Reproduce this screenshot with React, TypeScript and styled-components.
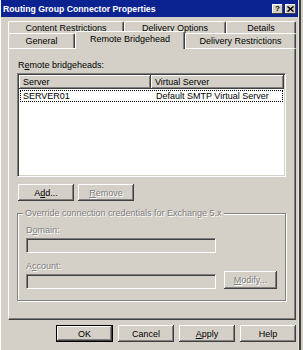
import styled, { createGlobalStyle } from "styled-components";

const GlobalStyle = createGlobalStyle`
  html, body {
    margin: 0;
    padding: 0;
    background: #d4d0c8;
  }
  body {
    font-family: "Liberation Sans", Arial, sans-serif;
    font-size: 9px;
    color: #000;
  }
  * {
    box-sizing: border-box;
  }
`;

const Window = styled.div`
  width: 301px;
  height: 350px;
  background: #d4d0c8;
  border-left: 1px solid #fff;
  border-right: 2px solid #404040;
  box-shadow: inset -1px 0 #e8e6e0;
  display: flex;
  flex-direction: column;
`;

const TitleBar = styled.div`
  height: 17px;
  margin-right: 1px;
  background: #0b2390;
  padding: 0 2px 0 2px;
  display: flex;
  align-items: center;
  justify-content: space-between;
`;

const Title = styled.span`
  color: #fff;
  font-weight: bold;
  font-size: 8.7px;
`;

const CaptionButtons = styled.div`
  display: flex;
  gap: 2px;
`;

const CaptionButton = styled.div`
  width: 11px;
  height: 10px;
  background: #d4d0c8;
  box-shadow: inset -1px -1px #404040, inset 1px 1px #fff;
  display: flex;
  align-items: center;
  justify-content: center;
  font-weight: bold;
  font-size: 8px;
  line-height: 1;
`;

const Body = styled.div`
  padding: 4px 3px 0 7px;
  display: flex;
  flex-direction: column;
`;

const TabRow = styled.div<{ $h: number }>`
  display: flex;
  height: ${(p) => p.$h}px;
  align-items: flex-end;
`;

const Tab = styled.div<{ $w?: number; $active?: boolean }>`
  flex: ${(p) => (p.$w ? `0 0 ${p.$w}px` : "1 1 auto")};
  height: ${(p) => (p.$active ? "18px" : "100%")};
  margin-bottom: ${(p) => (p.$active ? "-1px" : "0")};
  position: ${(p) => (p.$active ? "relative" : "static")};
  z-index: ${(p) => (p.$active ? 1 : "auto")};
  background: #d4d0c8;
  display: flex;
  align-items: center;
  justify-content: center;
  padding-bottom: ${(p) => (p.$active ? "3px" : "0")};
  border-top: 1px solid #fff;
  border-left: 1px solid #fff;
  border-right: 1px solid #404040;
  box-shadow: inset -1px 0 #808080;
  border-radius: 2px 2px 0 0;
  white-space: nowrap;
`;

const Panel = styled.div`
  height: 272px;
  border-top: 1px solid #fff;
  border-left: 1px solid #fff;
  border-right: 1px solid #404040;
  border-bottom: 1px solid #404040;
  box-shadow: inset -1px -1px #808080;
  padding: 10px 9px 0 8px;
  display: flex;
  flex-direction: column;
`;

const SectionLabel = styled.div`
  line-height: 12px;
  margin: 0 0 2px 1px;
`;

const ListView = styled.div`
  height: 104px;
  background: #fff;
  border: 1px solid;
  border-color: #808080 #fff #fff #808080;
  box-shadow: inset 1px 1px #404040, inset -1px -1px #d4d0c8;
  padding: 1px;
`;

const ListHeader = styled.div`
  display: grid;
  grid-template-columns: 132px 1fr;
  height: 14px;
`;

const HeaderCell = styled.div`
  background: #d4d0c8;
  box-shadow: inset -1px -1px #404040, inset 1px 1px #fff, inset -2px -2px #808080;
  padding-left: 4px;
  line-height: 14px;
`;

const ListRow = styled.div`
  display: grid;
  grid-template-columns: 132px 1fr;
  height: 12px;
  margin: 1px 1px 0 1px;
  line-height: 12px;
  outline: 1px dotted #000;
  outline-offset: -1px;
`;

const Cell = styled.div<{ $pad: number }>`
  padding-left: ${(p) => p.$pad}px;
  white-space: nowrap;
`;

const ButtonRow = styled.div<{ $end?: boolean; $gap: number; $top: number }>`
  display: flex;
  gap: ${(p) => p.$gap}px;
  margin-top: ${(p) => p.$top}px;
  padding-left: 1px;
  justify-content: ${(p) => (p.$end ? "flex-end" : "flex-start")};
`;

const Button = styled.button<{ $default?: boolean; $h?: number }>`
  width: ${(p) => (p.$default ? 57 : 56)}px;
  height: ${(p) => p.$h ?? 17}px;
  padding: 0;
  font-family: inherit;
  font-size: 9px;
  color: #000;
  background: #d4d0c8;
  border: ${(p) => (p.$default ? "1px solid #000" : "none")};
  box-shadow: inset -1px -1px #404040, inset 1px 1px #fff,
    inset -2px -2px #808080;

  &:disabled {
    color: #808080;
    text-shadow: 1px 1px #fff;
  }
`;

const Group = styled.fieldset`
  margin: 7px 0 0 0;
  padding: 7px 8px 11px 8px;
  min-width: 0;
  border: 1px solid #808080;
  box-shadow: inset 1px 1px #fff, 1px 1px #fff;
`;

const Legend = styled.legend`
  margin-left: -3px;
  padding: 0 2px;
  background: #d4d0c8;
  color: #808080;
  text-shadow: 1px 1px #fff;
`;

const FieldLabel = styled.div`
  color: #808080;
  text-shadow: 1px 1px #fff;
  line-height: 10px;
  margin-bottom: 3px;
`;

const Input = styled.div`
  width: 190px;
  height: 15px;
  background: #d4d0c8;
  border: 1px solid;
  border-color: #808080 #fff #fff #808080;
  box-shadow: inset 1px 1px #404040, inset -1px -1px #d4d0c8;
`;

const AccountRow = styled.div`
  display: flex;
  align-items: flex-end;
  gap: 8px;
  margin-top: 8px;
`;

const Column = styled.div`
  display: flex;
  flex-direction: column;
`;

export default function App() {
  return (
    <>
      <GlobalStyle />
      <Window>
        <TitleBar>
          <Title>Routing Group Connector Properties</Title>
          <CaptionButtons>
            <CaptionButton>?</CaptionButton>
            <CaptionButton>
              <svg width="7" height="6" viewBox="0 0 7 6">
                <path d="M0.5 0.5 L6.5 5.5 M6.5 0.5 L0.5 5.5" stroke="#000" strokeWidth="1.5" />
              </svg>
            </CaptionButton>
          </CaptionButtons>
        </TitleBar>
        <Body>
          <TabRow $h={12}>
            <Tab $w={116}>Content Restrictions</Tab>
            <Tab $w={102}>Delivery Options</Tab>
            <Tab>Details</Tab>
          </TabRow>
          <TabRow $h={15}>
            <Tab $w={67}>General</Tab>
            <Tab $w={110} $active>
              Remote Bridgehead
            </Tab>
            <Tab>Delivery Restrictions</Tab>
          </TabRow>
          <Panel>
            <SectionLabel>
              R<u>e</u>mote bridgeheads:
            </SectionLabel>
            <ListView>
              <ListHeader>
                <HeaderCell>Server</HeaderCell>
                <HeaderCell>Virtual Server</HeaderCell>
              </ListHeader>
              <ListRow>
                <Cell $pad={3}>SERVER01</Cell>
                <Cell $pad={4}>Default SMTP Virtual Server</Cell>
              </ListRow>
            </ListView>
            <ButtonRow $gap={4} $top={7}>
              <Button $h={17}>
                A<u>d</u>d...
              </Button>
              <Button disabled>
                <u>R</u>emove
              </Button>
            </ButtonRow>
            <Group>
              <Legend>Override connection credentials for Exchange 5.x</Legend>
              <FieldLabel>
                D<u>o</u>main:
              </FieldLabel>
              <Input />
              <AccountRow>
                <Column>
                  <FieldLabel>
                    A<u>c</u>count:
                  </FieldLabel>
                  <Input />
                </Column>
                <Button disabled $h={18}>
                  <u>M</u>odify...
                </Button>
              </AccountRow>
            </Group>
          </Panel>
          <ButtonRow $end $gap={5} $top={5}>
            <Button $default>OK</Button>
            <Button>Cancel</Button>
            <Button>
              <u>A</u>pply
            </Button>
            <Button>Help</Button>
          </ButtonRow>
        </Body>
      </Window>
    </>
  );
}
